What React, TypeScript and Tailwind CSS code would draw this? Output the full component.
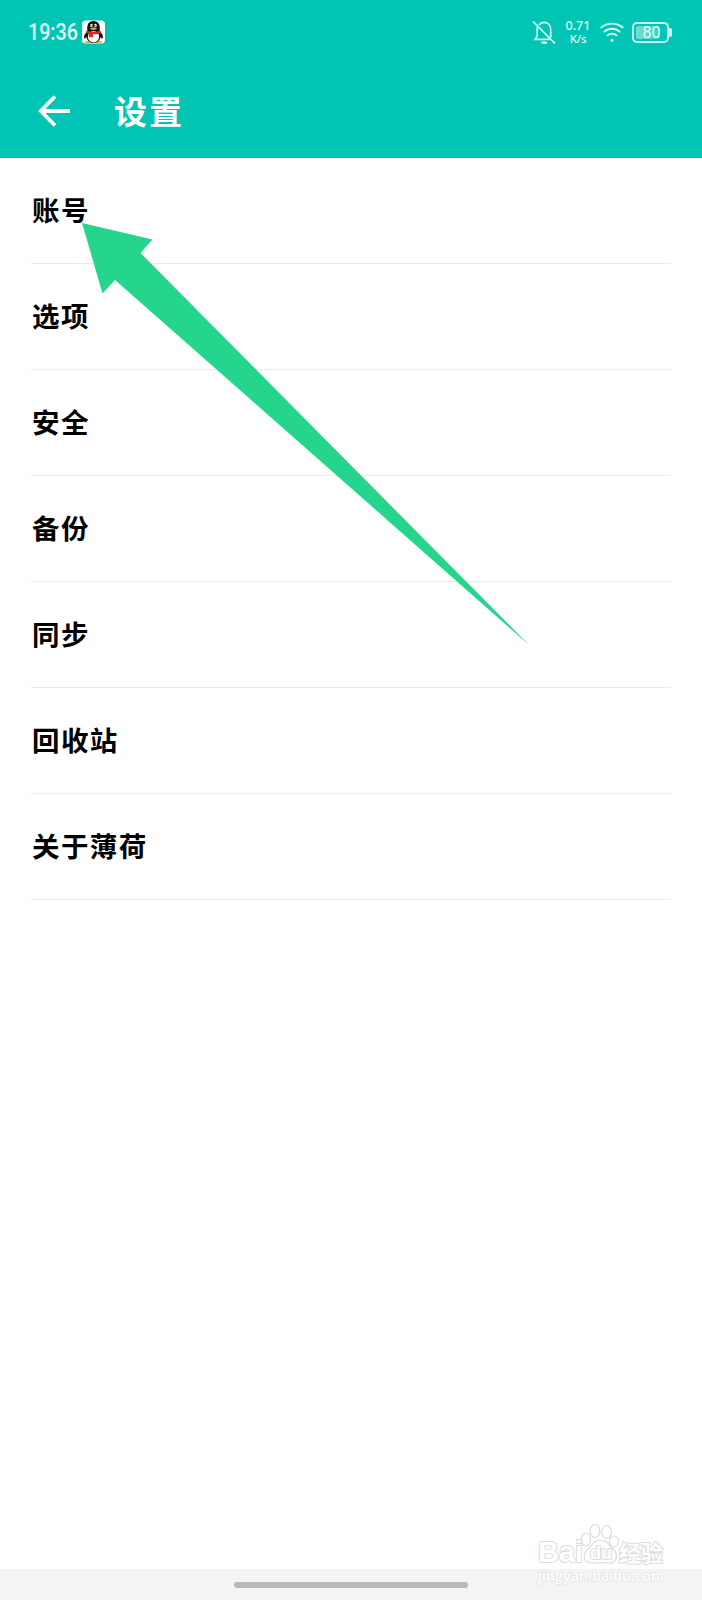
const MENU_ITEMS = ['账号', '选项', '安全', '备份', '同步', '回收站', '关于薄荷'];

function QQIcon() {
  return (
    <svg viewBox="0 0 24 24" className="ml-[4px] h-[24px] w-[23px]">
      <rect width="24" height="24" rx="4" fill="#fff" />
      <ellipse cx="7" cy="22.5" rx="4" ry="1.4" fill="#e3b53a" />
      <ellipse cx="17" cy="22.5" rx="4" ry="1.4" fill="#e3b53a" />
      <path d="M5.6 11C3 13.500 1.600 16.600 2.300 18.600c.6.8 1.700-.2 2.500-1.300h14.400c.8 1.100 1.900 2.100 2.500 1.300.7-2-.7-5.100-3.300-7.600z" fill="#111" />
      <path d="M12 .5c-4.300 0-6.500 3-6.500 6.800V15h13V7.300C18.500 3.500 16.300.5 12 .5z" fill="#111" />
      <ellipse cx="12" cy="16" rx="7.500" ry="7.500" fill="#111" />
      <ellipse cx="12" cy="17" rx="5.900" ry="6" fill="#fff" />
      <ellipse cx="10" cy="5.300" rx="1.400" ry="1.800" fill="#fff" />
      <ellipse cx="14" cy="5.300" rx="1.400" ry="1.800" fill="#fff" />
      <circle cx="10.500" cy="5.500" r=".7" fill="#111" />
      <circle cx="13.500" cy="5.500" r=".7" fill="#111" />
      <ellipse cx="12" cy="8.600" rx="3.400" ry="1.200" fill="#e8a51c" />
      <path d="M4.600 10.600c4.500 1.500 10.300 1.500 14.800 0l.3 2.600c-2.900 1-5.700 1.300-8.200 1.200v3.100H7.200v-3.600L4.300 13z" fill="#dc2430" />
    </svg>
  );
}

function MutedBellIcon() {
  return (
    <svg viewBox="0 0 24 25" fill="none" stroke="#d8fbf6" strokeWidth="1.700" strokeLinecap="round" className="h-[25px] w-[24px]">
      <path d="M1.500 1.800L22.500 23" />
      <path d="M7.500 4.300C8.800 3 10.200 2.400 12 2.400c4 0 6.700 2.900 6.700 6.900v7.500" />
      <path d="M5.200 7.500v8.400L3 19.300h14.200" />
      <path d="M10.500 22.600h3.500" strokeWidth="2.400" />
    </svg>
  );
}

function WifiIcon() {
  return (
    <svg viewBox="0 0 24 20" fill="none" stroke="#d8fbf6" strokeWidth="1.800" strokeLinecap="round" className="h-[20px] w-[24px]">
      <path d="M1.300 5.500c6-5.200 15.400-5.200 21.400 0" />
      <path d="M4.300 9.600c4.300-3.800 11.100-3.800 15.400 0" />
      <path d="M7.500 13.400c2.500-2.200 6.500-2.200 9 0" />
      <circle cx="12" cy="18.300" r="1.500" fill="#d8fbf6" stroke="none" />
    </svg>
  );
}

function Battery() {
  return (
    <div className="flex items-center">
      <div className="relative flex h-[21px] w-[37px] items-center justify-center overflow-hidden rounded-[5px] border-2 border-[#c9f7f1] pl-[2px]">
        <div className="absolute inset-y-[2px] left-[2px] w-[24px] rounded-[2px] bg-gradient-to-r from-[#6ee0d4] to-[#2fd0c2]" />
        <span className="relative inline-block scale-x-[0.95] font-['Roboto'] text-[17px] leading-none text-[#e6fffb]">80</span>
      </div>
      <div className="h-[9px] w-[3px] rounded-r-[2px] bg-[#c9f7f1]" />
    </div>
  );
}

function StatusBar() {
  return (
    <div className="flex h-[64px] items-center justify-between pr-[30px] pl-[28px]">
      <div className="flex items-center">
        <span className="w-[50px] font-['Roboto'] text-[24px] leading-none font-medium text-[#e6fffb]">
          <span className="inline-block origin-left scale-x-[0.82]">19:36</span>
        </span>
        <QQIcon />
      </div>
      <div className="flex items-center">
        <MutedBellIcon />
        <div className="ml-[9px] flex w-[26px] flex-col items-center font-['Noto_Sans'] text-[#e6fffb]">
          <span className="text-[12.5px] leading-[14px] font-medium">0.71</span>
          <span className="text-[11.500px] leading-[12px] font-medium tracking-[-0.3px]">K/s</span>
        </div>
        <div className="mr-[8px] ml-[9px]">
          <WifiIcon />
        </div>
        <Battery />
      </div>
    </div>
  );
}

function Pointer() {
  return (
    <svg viewBox="0 0 448 423" className="pointer-events-none absolute top-[223px] left-[82px] h-[423px] w-[448px]">
      <path d="M0 0L70.500 16.500L58.500 30L447 422L33 57L20.500 70.500Z" fill="#26d58d" />
    </svg>
  );
}

function Watermark() {
  return (
    <div className="pointer-events-none absolute right-[36px] bottom-[15px] flex w-[128px] flex-col text-white [paint-order:stroke_fill]">
      <div className="flex h-[41px] items-end font-bold [-webkit-text-stroke:2px_#dcdcdc]">
        <span className="-mb-[2px] w-[43px] font-['Liberation_Sans'] text-[29px] leading-[28px]">Bai</span>
        <div className="relative h-[41px] w-[38px]">
          <svg viewBox="0 0 38 41" fill="#fff" stroke="#dcdcdc" strokeWidth="1.200" className="h-full w-full [paint-order:normal]">
            <ellipse cx="5" cy="16.500" rx="4.600" ry="6.500" />
            <ellipse cx="14" cy="8" rx="4.800" ry="6.500" />
            <ellipse cx="25.500" cy="9" rx="4.800" ry="6.500" />
            <ellipse cx="33" cy="18.500" rx="4.600" ry="5.500" />
            <path d="M19 17c-6 0-8 5-12 9-5 4-6 14 4 14 5 0 11-1 16 0 9 1 11-9 5-14-4-4-6-9-13-9z" />
          </svg>
          <span className="absolute bottom-[4px] left-[9px] font-['Liberation_Sans'] text-[18px] leading-[14px]">du</span>
        </div>
        <span className="mb-[2px] font-['Noto_Sans_CJK_SC',sans-serif] text-[22px] leading-[22px]">经验</span>
      </div>
      <span className="mt-[3px] font-['Open_Sans'] text-[14.3px] leading-[18px] font-semibold whitespace-nowrap [-webkit-text-stroke:1.200px_#dfdfdf]">
        jingyan.baidu.com
      </span>
    </div>
  );
}

export default function App() {
  return (
    <div className="relative flex h-[1600px] w-[702px] flex-col overflow-hidden bg-white font-['Noto_Sans_CJK_SC',sans-serif]">
      <header className="h-[158px] bg-[#00c5b4]">
        <StatusBar />
        <div className="flex h-[94px] items-center pl-[38px] text-white">
          <svg viewBox="0 0 32 32" fill="none" stroke="currentColor" strokeWidth="3.800" className="h-[32px] w-[32px]">
            <path d="M32 16H3M17 1.500L2.800 16L17 30.500" />
          </svg>
          <h1 className="ml-[44px] pb-[2px] text-[33px] leading-none font-bold tracking-[2px]">设置</h1>
        </div>
      </header>

      <ul className="flex-1 px-[31px]">
        {MENU_ITEMS.map((item) => (
          <li key={item} className="flex h-[106px] items-center border-b border-[#ebebeb] pb-px pl-px text-[27.500px] leading-none font-bold tracking-[1.400px] text-black">
            {item}
          </li>
        ))}
      </ul>

      {/* Gesture bar */}
      <footer className="flex h-[31px] items-center justify-center bg-[#f4f4f4]">
        <div className="h-[6px] w-[234px] rounded-full bg-[#b9b9b9]" />
      </footer>

      <Pointer />
      <Watermark />
    </div>
  );
}
